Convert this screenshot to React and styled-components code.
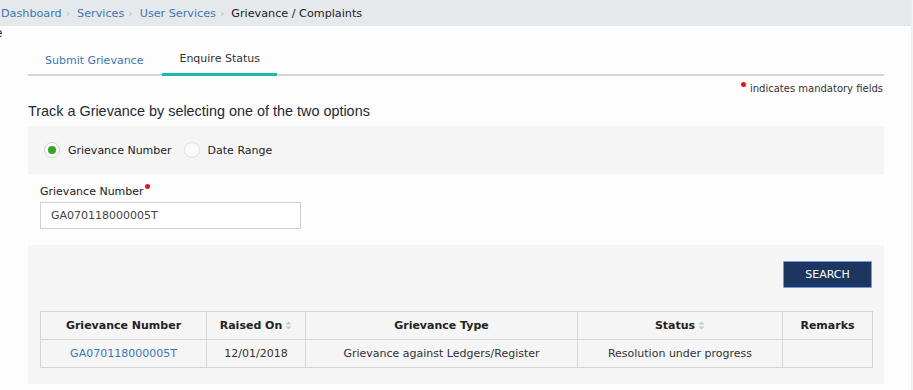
import styled, { createGlobalStyle } from "styled-components";

const GlobalStyle = createGlobalStyle`
  html, body {
    margin: 0;
    padding: 0;
    background: #f3f4f4;
  }
  body {
    font-family: "DejaVu Sans", Verdana, sans-serif;
    font-size: 11px;
    color: #333;
  }
  * { box-sizing: border-box; }
`;

const Page = styled.div`
  width: 912px;
  height: 390px;
  background: #fcfdfc;
  border-right: 1px solid #eceeed;
  overflow: hidden;
`;

const Breadcrumb = styled.div`
  height: 26px;
  background: #e5e9ec;
  display: flex;
  align-items: center;
  padding-left: 1px;
  font-size: 11.2px;
`;

const Crumb = styled.span`
  color: ${({ current }) => (current ? "#222" : "#3a78bb")};
`;

const Sep = styled.span`
  color: #b9bec3;
  font-size: 11px;
  margin: 0 7px 0 4px;
`;

const Stray = styled.div`
  height: 14px;
  margin-left: -5px;
  font-size: 12px;
  line-height: 14px;
  color: #222;
`;

const Content = styled.div`
  margin: 0 27px 0 28px;
`;

const Tabs = styled.div`
  display: flex;
  border-bottom: 2px solid #d4d6d6;
  height: 36px;
`;

const Tab = styled.div`
  padding: ${({ active }) => (active ? "12px 17px 0" : "14px 17px 0")};
  margin-bottom: -2px;
  font-size: 11px;
  color: ${({ active }) => (active ? "#333" : "#3a78bb")};
  border-bottom: 3px solid ${({ active }) => (active ? "#1db8a8" : "transparent")};
  &:first-child {
    padding-left: 17px;
    padding-right: 19px;
  }
`;

const Mandatory = styled.div`
  display: flex;
  justify-content: flex-end;
  align-items: center;
  margin-top: 6px;
  height: 12px;
  font-size: 10px;
  color: #333;
  padding-right: 1px;
`;

const RedDot = styled.span`
  display: inline-block;
  width: 5px;
  height: 5px;
  border-radius: 50%;
  background: #e8111b;
  margin-right: ${({ gap }) => gap || 0}px;
  margin-left: ${({ lead }) => lead || 0}px;
  align-self: flex-start;
`;

const Heading = styled.div`
  font-family: "Liberation Sans", Arial, sans-serif;
  font-size: 14.4px;
  color: #1e2a38;
  margin-top: 8px;
  height: 18px;
  line-height: 18px;
`;

const OptionPanel = styled.div`
  margin-top: 6px;
  height: 48px;
  background: #f4f5f4;
  display: flex;
  align-items: center;
  padding-left: 16px;
  gap: 12px;
`;

const RadioLabel = styled.label`
  display: flex;
  align-items: center;
  gap: 8px;
  color: #222;
  font-size: 11px;
`;

const RadioCircle = styled.span`
  width: 16px;
  height: 16px;
  border-radius: 50%;
  border: 1px solid ${({ checked }) => (checked ? "#c9d9c6" : "#dfe1df")};
  background: #f9faf9;
  display: flex;
  align-items: center;
  justify-content: center;
  &::after {
    content: "";
    width: 8px;
    height: 8px;
    border-radius: 50%;
    background: ${({ checked }) => (checked ? "#3aa329" : "transparent")};
  }
`;

const Field = styled.div`
  padding-left: 12px;
  margin-top: 10px;
`;

const FieldLabel = styled.div`
  display: flex;
  align-items: center;
  height: 14px;
  font-size: 11px;
  color: #222;
`;

const Input = styled.div`
  margin-top: 4px;
  width: 261px;
  height: 27px;
  border: 1px solid #cfd1d1;
  background: #fff;
  display: flex;
  align-items: center;
  padding-left: 10px;
  font-size: 11px;
  color: #444;
`;

const ResultPanel = styled.div`
  margin-top: 16px;
  background: #f4f5f4;
  padding: 16px 12px 17px;
  height: 139px;
`;

const ButtonRow = styled.div`
  display: flex;
  justify-content: flex-end;
`;

const SearchButton = styled.button`
  width: 89px;
  height: 27px;
  background: #1d3660;
  border: 1px solid #6a9be6;
  border-radius: 1px;
  color: #fff;
  font-family: "DejaVu Sans", Verdana, sans-serif;
  font-size: 11px;
  padding: 0;
`;

const Table = styled.table`
  margin-top: 23px;
  width: 832px;
  border-collapse: collapse;
  table-layout: fixed;
`;

const Th = styled.th`
  height: 28px;
  border: 1px solid #d4d6d6;
  font-weight: bold;
  font-size: 11px;
  color: #222;
  text-align: center;
  padding: 0;
`;

const Td = styled.td`
  height: 28px;
  border: 1px solid #d4d6d6;
  font-size: 11px;
  color: ${({ link }) => (link ? "#3a78bb" : "#333")};
  text-align: center;
  padding: 0;
`;

const SortIcon = () => (
  <svg width="7" height="9" viewBox="0 0 7 9" style={{ marginLeft: 3, verticalAlign: "-1px" }}>
    <path d="M3.5 0.5 L6.5 3.5 H0.5 Z" fill="#c4c6c6" />
    <path d="M3.5 8.5 L6.5 5.5 H0.5 Z" fill="#c4c6c6" />
  </svg>
);

const columns = [
  { name: "Grievance Number", width: 166 },
  { name: "Raised On", width: 99, sort: true },
  { name: "Grievance Type", width: 272 },
  { name: "Status", width: 205, sort: true },
  { name: "Remarks", width: 90 },
];

const App = () => (
  <>
    <GlobalStyle />
    <Page>
      <Breadcrumb>
        <Crumb>Dashboard</Crumb>
        <Sep>›</Sep>
        <Crumb>Services</Crumb>
        <Sep>›</Sep>
        <Crumb>User Services</Crumb>
        <Sep>›</Sep>
        <Crumb current>Grievance / Complaints</Crumb>
      </Breadcrumb>
      <Stray>e</Stray>
      <Content>
        <Tabs>
          <Tab>Submit Grievance</Tab>
          <Tab active>Enquire Status</Tab>
        </Tabs>
        <Mandatory>
          <RedDot gap={4} />
          indicates mandatory fields
        </Mandatory>
        <Heading>Track a Grievance by selecting one of the two options</Heading>
        <OptionPanel>
          <RadioLabel>
            <RadioCircle checked />
            Grievance Number
          </RadioLabel>
          <RadioLabel>
            <RadioCircle />
            Date Range
          </RadioLabel>
        </OptionPanel>
        <Field>
          <FieldLabel>
            Grievance Number
            <RedDot lead={1} />
          </FieldLabel>
          <Input>GA070118000005T</Input>
        </Field>
        <ResultPanel>
          <ButtonRow>
            <SearchButton>SEARCH</SearchButton>
          </ButtonRow>
          <Table>
            <colgroup>
              {columns.map((c) => (
                <col key={c.name} style={{ width: c.width }} />
              ))}
            </colgroup>
            <thead>
              <tr>
                {columns.map((c) => (
                  <Th key={c.name}>
                    {c.name}
                    {c.sort && <SortIcon />}
                  </Th>
                ))}
              </tr>
            </thead>
            <tbody>
              <tr>
                <Td link>GA070118000005T</Td>
                <Td>12/01/2018</Td>
                <Td>Grievance against Ledgers/Register</Td>
                <Td>Resolution under progress</Td>
                <Td></Td>
              </tr>
            </tbody>
          </Table>
        </ResultPanel>
      </Content>
    </Page>
  </>
);

export default App;
